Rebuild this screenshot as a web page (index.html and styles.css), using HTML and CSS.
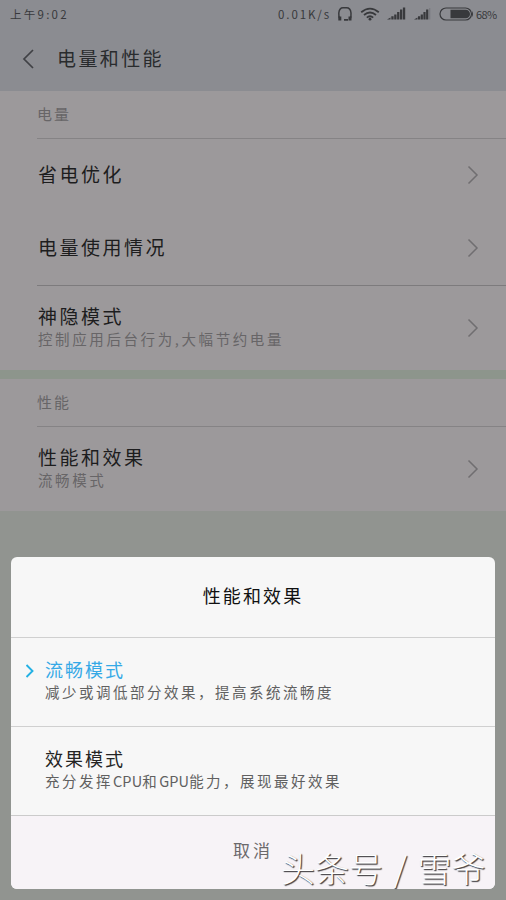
FILE: index.html
```html
<!DOCTYPE html>
<html lang="zh-CN">
<head>
<meta charset="utf-8">
<title>电量和性能</title>
<link rel="stylesheet" href="styles.css">
</head>
<body>
<div class="screen">
  <header class="top">
    <div class="status">
      <span class="time">上午<span class="digits">9:02</span></span>
      <span class="speed">0.01K/s</span>
      <svg class="icon headset" width="16" height="16" viewBox="0 0 16 16"><path d="M3.200 13.500C1.800 11.500 1.600 9 1.800 7 2.200 3.500 4 1.800 6 1.800h3.500c2.500 0 4.200 2 4.500 5.200.2 2 0 4.500-1 6.500" fill="none" stroke="currentColor" stroke-width="1.500"/><path d="M1.300 10.500h3v4h-3zM11.500 10.500h3v4h-3zM7 13h4v1.700H7z" fill="currentColor"/></svg>
      <svg class="icon wifi" width="20" height="14" viewBox="0 0 20 14"><path d="M1.2 5.2Q10-2 18.8 5.2M4 8q6-5 12 0M6.8 10.6q3.2-2.7 6.4 0" fill="none" stroke="currentColor" stroke-width="1.8"/><circle cx="10" cy="12.2" r="1.4" fill="currentColor"/></svg>
      <svg class="icon signal" width="19" height="13" viewBox="0 0 19 13"><path d="M0 12.500l3.500-2v2zM4.300 12.500v-3.200h2.300v3.200zM7.200 12.500v-5h2.300v5zM10.100 12.500V5h2.300v7.500zM13 12.500v-10h2.300v10zM15.900 12.500V.5h2.300v12z" fill="currentColor"/></svg>
      <svg class="icon signal-two" width="17" height="13" viewBox="0 0 17 13"><path d="M0 12.500l3.500-2v2zM4 12.500v-3.200h2.200v3.200zM6.700 12.500v-5h2.200v5zM9.400 12.500V5h2.200v7.500zM12.100 12.500V2.500h2.200v10z" fill="currentColor"/><path d="M15.200 12.500V1h1v11.500z" fill="currentColor" opacity=".25"/></svg>
      <svg class="icon battery" width="35" height="14" viewBox="0 0 35 14"><rect x="1" y="1" width="31.500" height="12" rx="6" fill="none" stroke="currentColor" stroke-width="1.200"/><path d="M11.500 2.700h15.200a4.300 4.300 0 0 1 0 8.600H11.500z" fill="currentColor"/><path d="M33 4q2 3 0 6z" fill="currentColor"/></svg>
      <span class="percent">68%</span>
    </div>
    <div class="titlebar">
      <svg class="back" width="14" height="22" viewBox="0 0 14 22"><path d="M12 2 3 11l9 9" fill="none" stroke="currentColor" stroke-width="1.700"/></svg>
      <h1>电量和性能</h1>
    </div>
  </header>

  <section class="group">
    <h2>电量</h2>
    <div class="row single">
      <div class="name">省电优化</div>
      <svg class="arrow" width="12" height="20" viewBox="0 0 12 20"><path d="m1.500 1.500 8.500 8.500-8.500 8.500" fill="none" stroke="currentColor" stroke-width="1.500"/></svg>
    </div>
    <div class="row single">
      <div class="name">电量使用情况</div>
      <svg class="arrow" width="12" height="20" viewBox="0 0 12 20"><path d="m1.500 1.500 8.500 8.500-8.500 8.500" fill="none" stroke="currentColor" stroke-width="1.500"/></svg>
    </div>
    <div class="row double ruled">
      <div>
        <div class="name">神隐模式</div>
        <div class="detail">控制应用后台行为<span class="comma">,</span>大幅节约电量</div>
      </div>
      <svg class="arrow" width="12" height="20" viewBox="0 0 12 20"><path d="m1.500 1.500 8.500 8.500-8.500 8.500" fill="none" stroke="currentColor" stroke-width="1.500"/></svg>
    </div>
  </section>

  <section class="group performance">
    <h2>性能</h2>
    <div class="row double">
      <div>
        <div class="name">性能和效果</div>
        <div class="detail">流畅模式</div>
      </div>
      <svg class="arrow" width="12" height="20" viewBox="0 0 12 20"><path d="m1.500 1.500 8.500 8.500-8.500 8.500" fill="none" stroke="currentColor" stroke-width="1.500"/></svg>
    </div>
  </section>

  <div class="dialog">
    <div class="heading">性能和效果</div>
    <div class="option selected">
      <svg class="mark" width="10" height="14" viewBox="0 0 10 14"><path d="m1.500 1 6 6-6 6" fill="none" stroke="currentColor" stroke-width="1.900"/></svg>
      <div class="label">流畅模式</div>
      <div class="hint">减少或调低部分效果，提高系统流畅度</div>
    </div>
    <div class="option">
      <div class="label">效果模式</div>
      <div class="hint">充分发挥<span class="latin">CPU</span>和<span class="latin">GPU</span>能力，展现最好效果</div>
    </div>
    <div class="cancel">取消</div>
  </div>
  <div class="watermark">头条号 / 雪爷</div>
</div>
</body>
</html>
```
FILE: styles.css
```css
* { box-sizing: border-box; }
body { margin: 0; font-family: "Noto Sans CJK SC", sans-serif; }
svg { display: block; flex: none; }
h1, h2 { margin: 0; font-weight: 400; }

.screen { position: relative; width: 506px; height: 900px; overflow: hidden; background: #919490; white-space: nowrap; }

.top { height: 91px; background: #8b8c91; color: #34363a; }
.status { display: flex; align-items: center; height: 27px; padding-left: 10px; line-height: 24px; color: #38393c; }
.time { width: 268px; font-size: 11.5px; letter-spacing: 2.3px; }
.digits { letter-spacing: 2.2px; }
.speed { width: 59px; font-size: 11.5px; letter-spacing: 1.9px; }
.wifi { margin-left: 7px; }
.signal { margin-left: 7px; }
.signal-two { margin-left: 8px; }
.battery { margin-left: 8px; }
.percent { margin-left: 2px; font-size: 11px; letter-spacing: -0.6px; }
.titlebar { display: flex; align-items: center; height: 64px; padding-left: 21px; }
.back { color: #404145; }
h1 { margin-left: 22px; font-size: 19px; line-height: 58px; padding-bottom: 2px; letter-spacing: 2.4px; color: #292b2d; }

.group { background: #9c999b; }
.performance { margin-top: 9px; box-shadow: 0 -9px #8d958c; }
h2 { height: 48px; margin-left: 37px; border-bottom: 1px solid #858385; font-size: 15px; line-height: 45px; letter-spacing: 2px; color: #676567; }
.row { display: flex; align-items: center; justify-content: space-between; margin-left: 37px; padding: 0 27px 0 1px; }
.single { height: 73px; }
.double { height: 84px; }
.ruled { height: 85px; border-top: 1px solid #7d7b7d; }
.name { margin-top: -4px; font-size: 19px; line-height: 26px; letter-spacing: 2.5px; color: #1d1d1e; }
.detail { font-size: 14.5px; line-height: 21px; letter-spacing: 2.6px; color: #676567; }
.double .detail { margin-top: -1px; }
.arrow { margin-top: -1px; color: #706e71; }

.dialog { position: absolute; left: 11px; top: 557px; width: 484px; height: 332px; border-radius: 6px; overflow: hidden; background: #f7f7f7; }
.heading { height: 80px; font-size: 18px; line-height: 76px; letter-spacing: 2.1px; text-align: center; color: #111; }
.option { position: relative; height: 89px; padding: 20px 0 0 34px; border-top: 1px solid #d0d0d0; }
.label { font-size: 18px; line-height: 23px; letter-spacing: 2px; color: #242424; }
.selected .label { color: #35a9e6; }
.mark { position: absolute; left: 14px; top: 26px; color: #24b1e4; }
.hint { font-size: 14.5px; line-height: 21px; letter-spacing: 2.5px; color: #606060; }
.latin { letter-spacing: 0.1px; }
.cancel { height: 74px; border-top: 1px solid #cbcbcb; background: #f7f3f7; font-size: 17px; line-height: 68px; letter-spacing: 3px; text-align: center; color: #6b686b; }
.watermark { position: absolute; left: 281px; top: 844px; font-size: 34px; line-height: 48px; font-weight: 300; word-spacing: 3px; color: #fff; text-shadow: 1px 1px 1px #4b484c, 1px 1px 1px #666; }
```
